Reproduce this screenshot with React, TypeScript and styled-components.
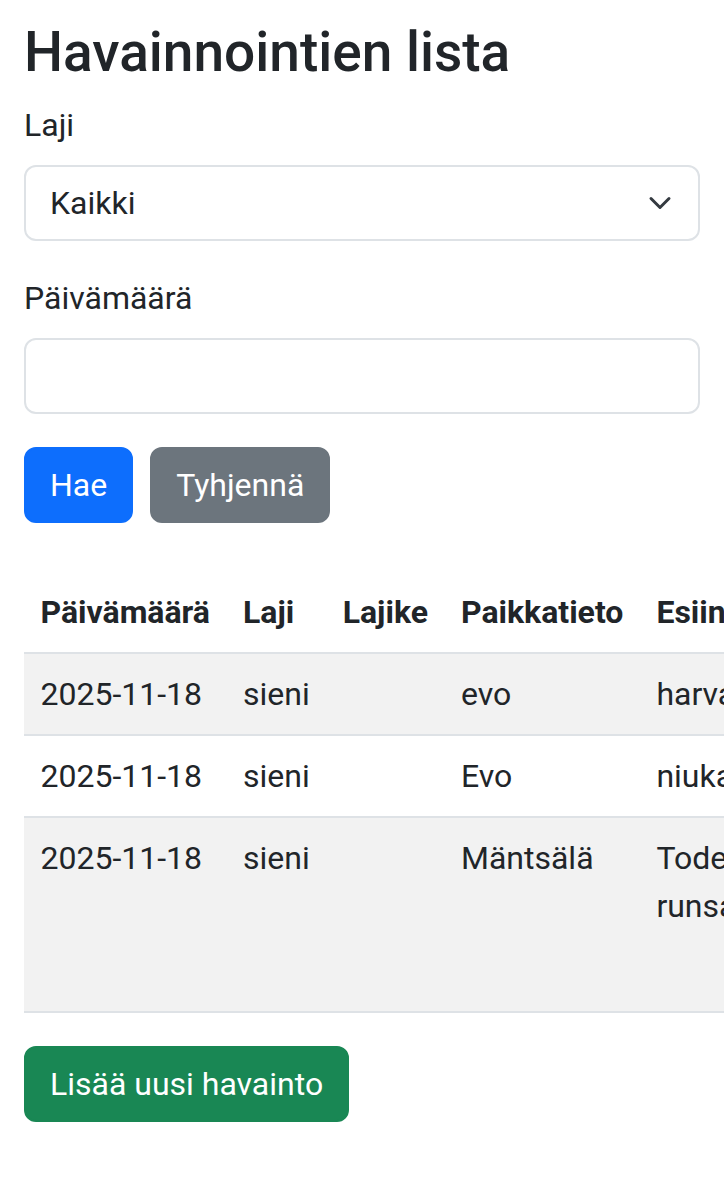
import React from "react";
import styled, { createGlobalStyle } from "styled-components";

const GlobalStyle = createGlobalStyle`
  *, *::before, *::after { box-sizing: border-box; }
  html, body { margin: 0; padding: 0; background: #ffffff; }
  body {
    font-family: Roboto, "Noto Sans", "Liberation Sans", sans-serif;
    font-size: 32px;
    line-height: 1.5;
    color: #212529;
    -webkit-font-smoothing: antialiased;
  }
`;

const Page = styled.main`
  padding: 19px 24px 0;
  overflow: hidden;
`;

const Title = styled.h1`
  margin: 0 0 16px;
  font-size: 55px;
  font-weight: 500;
  line-height: 1.2;
  color: #212529;
`;

const Form = styled.form`
  margin-bottom: 49px;
`;

const Field = styled.div`
  margin-bottom: 33px;
`;

const Label = styled.label`
  display: inline-block;
  margin-bottom: 16px;
`;

const SelectWrap = styled.div`
  position: relative;
`;

const Select = styled.select`
  display: block;
  width: 100%;
  appearance: none;
  -webkit-appearance: none;
  padding: 12px 72px 12px 24px;
  font-family: inherit;
  font-size: 32px;
  line-height: 1.5;
  color: #212529;
  background: #ffffff;
  border: 2px solid #dee2e6;
  border-radius: 12px;
  outline: none;
`;

const Chevron = styled.svg`
  position: absolute;
  right: 28px;
  top: 50%;
  width: 24px;
  height: 24px;
  transform: translateY(-50%);
  pointer-events: none;
`;

const TextInput = styled.input`
  display: block;
  width: 100%;
  padding: 12px 24px;
  font-family: inherit;
  font-size: 32px;
  line-height: 1.5;
  color: #212529;
  background: #ffffff;
  border: 2px solid #dee2e6;
  border-radius: 12px;
  outline: none;
`;

const ButtonRow = styled.div`
  display: flex;
  gap: 17px;
`;

const colors: Record<string, string> = {
  primary: "#0d6efd",
  secondary: "#6c757d",
  success: "#198754",
};

const Button = styled.button<{ $variant: "primary" | "secondary" | "success" }>`
  display: inline-block;
  padding: 12px 24px;
  font-family: inherit;
  font-size: 32px;
  font-weight: 400;
  line-height: 1.5;
  color: #ffffff;
  background: ${(p) => colors[p.$variant]};
  border: 2px solid ${(p) => colors[p.$variant]};
  border-radius: 12px;
  cursor: pointer;
`;

const TableWrap = styled.div`
  margin-bottom: 33px;
`;

const Table = styled.table`
  width: 100%;
  border-collapse: collapse;
  vertical-align: top;
  color: #212529;
`;

const Th = styled.th`
  padding: 16px 16.5px;
  text-align: left;
  font-weight: 700;
  border-bottom: 2px solid #dee2e6;
  background: #ffffff;
  white-space: nowrap;
`;

const Row = styled.tr`
  &:nth-of-type(odd) > td {
    background: #f2f2f2;
  }
`;

const Td = styled.td`
  padding: 16px 16.5px;
  vertical-align: top;
  border-bottom: 2px solid #dee2e6;
  background: #ffffff;
`;

const Thumb = styled.div`
  width: 214px;
  height: 161px;
  background: #c9c4b6;
`;

type Obs = {
  date: string;
  species: string;
  variety: string;
  place: string;
  amount: string;
  note: string;
  image?: boolean;
};

const rows: Obs[] = [
  { date: "2025-11-18", species: "sieni", variety: "", place: "evo", amount: "harvassa", note: "" },
  { date: "2025-11-18", species: "sieni", variety: "", place: "Evo", amount: "niukasti", note: "" },
  {
    date: "2025-11-18",
    species: "sieni",
    variety: "",
    place: "Mäntsälä",
    amount: "Todella runsaasti",
    note: "",
    image: true,
  },
];

export default function App() {
  return (
    <>
      <GlobalStyle />
      <Page>
        <Title>Havainnointien lista</Title>
        <Form onSubmit={(e) => e.preventDefault()}>
          <Field>
            <Label htmlFor="laji">Laji</Label>
            <SelectWrap>
              <Select id="laji" defaultValue="">
                <option value="">Kaikki</option>
                <option value="sieni">sieni</option>
                <option value="kasvi">kasvi</option>
              </Select>
              <Chevron viewBox="0 0 16 16" fill="none">
                <path
                  d="M2 5l6 6 6-6"
                  stroke="#343a40"
                  strokeWidth="2"
                  strokeLinecap="round"
                  strokeLinejoin="round"
                />
              </Chevron>
            </SelectWrap>
          </Field>
          <Field>
            <Label htmlFor="pvm">Päivämäärä</Label>
            <TextInput id="pvm" type="text" />
          </Field>
          <ButtonRow>
            <Button type="submit" $variant="primary">Hae</Button>
            <Button type="button" $variant="secondary">Tyhjennä</Button>
          </ButtonRow>
        </Form>

        <TableWrap>
          <Table>
            <thead>
              <tr>
                <Th>Päivämäärä</Th>
                <Th>Laji</Th>
                <Th>Lajike</Th>
                <Th>Paikkatieto</Th>
                <Th>Esiintyminen</Th>
                <Th>Lisätiedot</Th>
                <Th>Kuva</Th>
              </tr>
            </thead>
            <tbody>
              {rows.map((r, i) => (
                <Row key={i}>
                  <Td>{r.date}</Td>
                  <Td>{r.species}</Td>
                  <Td>{r.variety}</Td>
                  <Td>{r.place}</Td>
                  <Td>{r.amount}</Td>
                  <Td>{r.note}</Td>
                  <Td>{r.image ? <Thumb /> : null}</Td>
                </Row>
              ))}
            </tbody>
          </Table>
        </TableWrap>

        <Button type="button" $variant="success">Lisää uusi havainto</Button>
      </Page>
    </>
  );
}
